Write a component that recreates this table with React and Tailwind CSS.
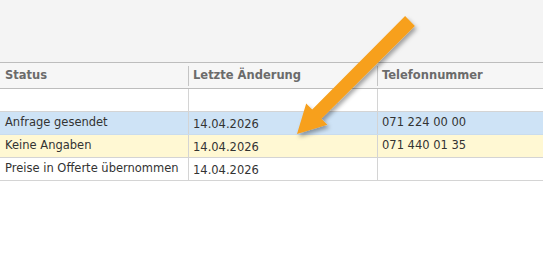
const rows = [
  { status: '', date: '', phone: '', tone: 'bg-white border-[#d4d4d4]' },
  { status: 'Anfrage gesendet', date: '14.04.2026', phone: '071 224 00 00', tone: 'bg-[#cee3f6] border-[#c9dcee]' },
  { status: 'Keine Angaben', date: '14.04.2026', phone: '071 440 01 35', tone: 'bg-[#fff8d3] border-[#d4d4d4]' },
  { status: 'Preise in Offerte übernommen', date: '14.04.2026', phone: '', tone: 'bg-white border-[#d4d4d4]' },
]

function Arrow() {
  return (
    <svg className="absolute left-0 top-0 pointer-events-none" width="543" height="254" viewBox="0 0 543 254">
      <defs>
        <filter id="arrowShadow" x="-20%" y="-20%" width="140%" height="140%">
          <feDropShadow dx="2" dy="3" stdDeviation="2" floodColor="#000" floodOpacity="0.35" />
        </filter>
      </defs>
      <polygon
        points="414.9,25.9 405.1,16.1 312.2,109.6 306.2,103.6 297,134 327.4,124.8 321.4,118.8"
        fill="#f7a01c"
        filter="url(#arrowShadow)"
      />
    </svg>
  )
}

export default function App() {
  return (
    <div className="relative w-[543px] h-[254px] bg-white overflow-hidden text-[11.5px] text-[#333]" style={{ fontFamily: '"DejaVu Sans", sans-serif' }}>
      <div className="h-[62px] bg-[#f4f4f4]" />

      {/* column headers */}
      <div className="flex items-center h-[27px] bg-[#f6f6f6] border-y border-[#bdbdbd] font-bold text-[#6b6b6b]">
        <div className="w-[188px] pl-[5px]">Status</div>
        <div className="w-px h-[20px] bg-[#c4c4c4]" />
        <div className="w-[188px] pl-[4px]">Letzte Änderung</div>
        <div className="w-px h-[20px] bg-[#c4c4c4]" />
        <div className="flex-1 pl-[4px]">Telefonnummer</div>
      </div>

      {rows.map((r, i) => (
        <div key={i} className={`flex h-[23px] border-b ${r.tone}`}>
          <div className="w-[189px] pl-[5px] flex items-center border-r border-[#d4d4d4]">{r.status}</div>
          <div className="w-[189px] pl-[4px] pt-[3px] flex items-center border-r border-[#d4d4d4]">{r.date}</div>
          <div className="flex-1 pl-[4px] flex items-center">{r.phone}</div>
        </div>
      ))}

      <Arrow />
    </div>
  )
}
